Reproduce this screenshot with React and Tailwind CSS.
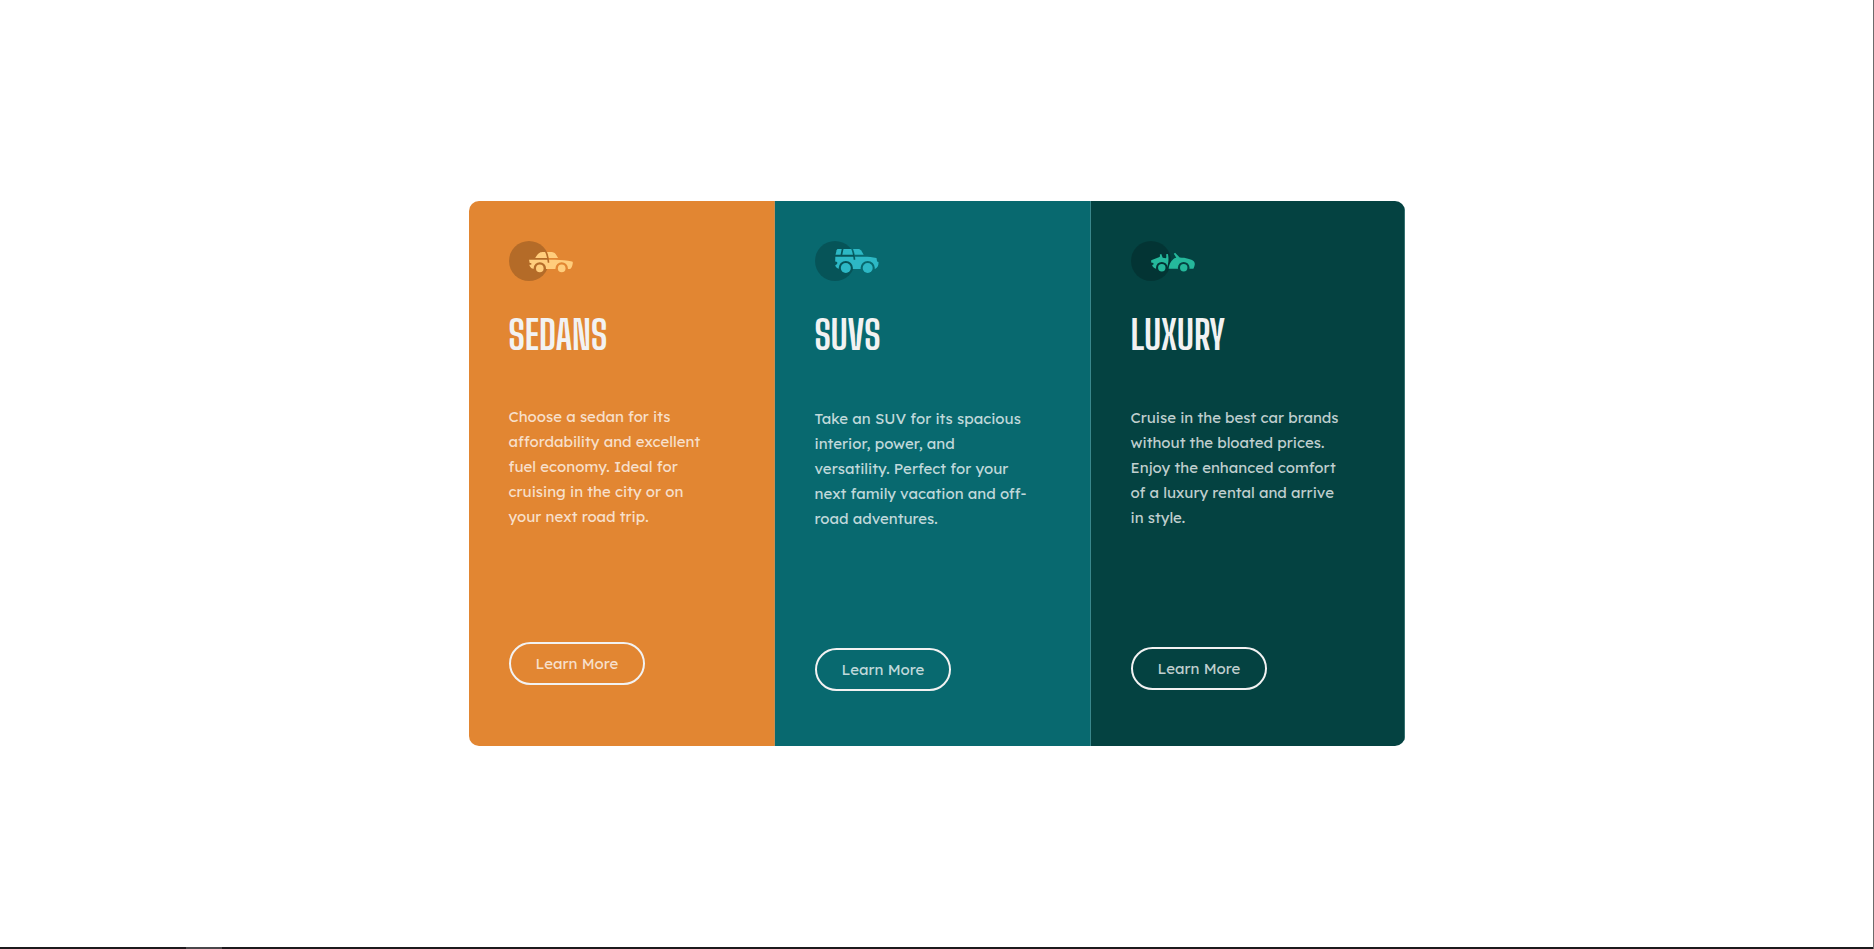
function SedanIcon() {
  return (
    <svg width="64" height="40" viewBox="0 0 64 40" aria-hidden="true">
      <circle cx="20" cy="20" r="20" fill="#000" opacity=".2" />
      <mask id="sedan-gaps">
        <rect width="64" height="40" fill="#fff" />
        <path d="M36.6 10c1.6 3 2.6 7 3 11.8" fill="none" stroke="#000" strokeWidth="1.7" />
        <circle cx="30.8" cy="27.4" r="6.2" fill="#000" />
        <circle cx="52.7" cy="27.4" r="6.2" fill="#000" />
      </mask>
      <g fill="#ffcd7c">
        <g mask="url(#sedan-gaps)">
          <path d="M26.2 17c1.6-2.6 3-4.7 5.3-5.7C33 10.8 36 11 41 11c2.9 0 4.6.5 5.6 1.9l2.5 4.1z" />
          <path d="M20 18.7h26c6 0 12 .7 17 1.9.9.3 1 1 .7 2.2-.4 2.2-1.2 5-2.6 5.2H26c-2.6 0-4.8-.8-5.7-4.2h2v-1.9h-1.6z" />
        </g>
        <circle cx="30.8" cy="27.4" r="3.8" />
        <circle cx="52.7" cy="27.4" r="3.8" />
      </g>
    </svg>
  );
}

function SuvIcon() {
  return (
    <svg width="64" height="40" viewBox="0 0 64 40" aria-hidden="true">
      <circle cx="20" cy="20" r="20" fill="#000" opacity=".2" />
      <mask id="suv-gaps">
        <rect width="64" height="40" fill="#fff" />
        <path d="M36.8 7c1.5 3.5 2.4 7.5 2.7 11.8M27.8 7l-1.6 8" fill="none" stroke="#000" strokeWidth="1.7" />
        <circle cx="30.8" cy="27" r="7.1" fill="#000" />
        <circle cx="52.7" cy="27" r="7.1" fill="#000" />
      </mask>
      <g fill="#2db8c5">
        <g mask="url(#suv-gaps)">
          <path d="M20.5 13.8l1.1-4.6c.3-.9.7-1.3 1.6-1.3h19c2 0 3.2.4 4 1.7l2.5 4.2z" />
          <path d="M20.3 15.7H49c4.5 0 8.5.4 12.500 1.400l.6 3.300 1.400.6c.2 3.200-.7 5.500-3.500 7H25.500c-2.800 0-4.600-1-5.300-3.700l2-1.200v-2l-2-.5z" />
        </g>
        <circle cx="30.8" cy="27" r="5" />
        <circle cx="52.7" cy="27" r="5" />
      </g>
    </svg>
  );
}

function LuxuryIcon() {
  return (
    <svg width="64" height="40" viewBox="0 0 64 40" aria-hidden="true">
      <circle cx="20" cy="20" r="20" fill="#000" opacity=".2" />
      <mask id="luxury-gaps">
        <rect width="64" height="40" fill="#fff" />
        <circle cx="30.8" cy="26.7" r="5.8" fill="#000" />
        <circle cx="52.7" cy="26.7" r="5.8" fill="#000" />
      </mask>
      <g fill="#25b89b">
        <g mask="url(#luxury-gaps)">
          <path d="M20.2 19.2l8.3-3.2c.7-.6.5-1.6.3-2.6l1.5-.4 1.4 3.7 3.2.6c.8-.8.3-2.6.2-4l1.8-.3c1 4.2.9 10-1.500 14.800H25c-1.600-.6-3.400-1.500-3.900-3.800l1.400-.6-.1-1.500-2.300-.5z" />
          <path d="M42.800 12.700l1.300-.9 4.600 4.700c6 .2 11.500 1.500 14.300 4 1.400 1.900.8 4.300-.6 7.300H37.600c.4-3.700 1.600-6.300 3.900-8.700 1-1.100 2-2 3.800-2.300z" />
        </g>
        <circle cx="30.8" cy="26.7" r="3.7" />
        <circle cx="52.7" cy="26.7" r="3.7" />
      </g>
    </svg>
  );
}

const cars = [
  {
    name: "SEDANS",
    Icon: SedanIcon,
    text: "Choose a sedan for its affordability and excellent fuel economy. Ideal for cruising in the city or on your next road trip.",
    panel: "basis-[306px] bg-[#e28632] border-[#c58f52]",
    copy: "mt-[45px] w-[205px]",
    action: "mb-[61px]",
  },
  {
    name: "SUVS",
    Icon: SuvIcon,
    text: "Take an SUV for its spacious interior, power, and versatility. Perfect for your next family vacation and off-road adventures.",
    panel: "basis-[316px] bg-[#08696f] border-[#39878c]",
    copy: "mt-[47px] w-[216px]",
    action: "mb-[55px]",
  },
  {
    name: "LUXURY",
    Icon: LuxuryIcon,
    text: "Cruise in the best car brands without the bloated prices. Enjoy the enhanced comfort of a luxury rental and arrive in style.",
    panel: "basis-[314px] bg-[#044241] border-[#367170]",
    copy: "mt-[46px] w-[216px]",
    action: "mb-14",
  },
];

export default function App() {
  return (
    <div className="flex min-h-screen flex-col border-r border-[#6b6b6b] bg-white font-['Lexend_Deca',sans-serif]">
      <main className="flex grow items-center justify-center">
        <div className="flex min-h-[545px] overflow-hidden rounded-[10px]">
          {cars.map(({ name, Icon, text, panel, copy, action }) => (
            <section key={name} className={`flex shrink-0 flex-col items-start border-r px-10 pt-10 ${panel}`}>
              <Icon />
              <h2 className="mt-[30px] font-['Big_Shoulders_Display',sans-serif] text-[40px] leading-12 font-bold text-[#f2f2f2]">
                {name}
              </h2>
              <p className={`grow text-[15px] leading-[25px] text-white/75 ${copy}`}>{text}</p>
              <button
                type="button"
                className={`h-[43px] rounded-full border-2 border-[#f2f2f2] px-[25px] pt-0.5 text-[15px] text-white/75 ${action}`}
              >
                Learn More
              </button>
            </section>
          ))}
        </div>
      </main>
      <footer className="flex h-[2px] bg-[#1c1a1d]">
        <div className="ml-[186px] w-9 bg-[#4a484b]" />
      </footer>
    </div>
  );
}
